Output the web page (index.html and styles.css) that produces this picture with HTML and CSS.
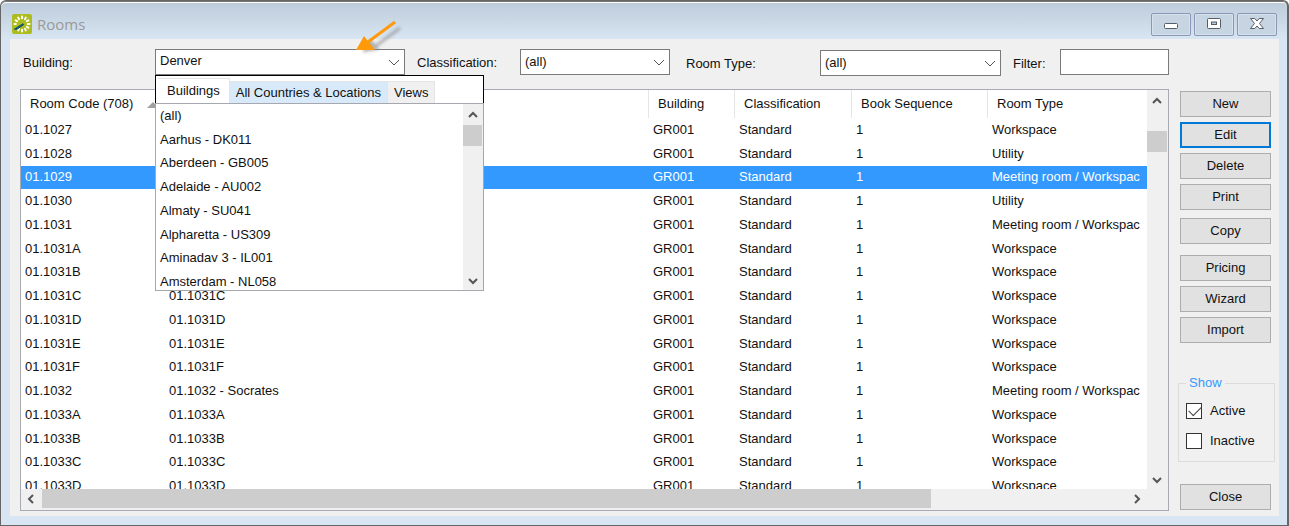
FILE: index.html
```
<!DOCTYPE html>
<html lang="en">
<head>
<meta charset="utf-8">
<title>Rooms</title>
<link rel="stylesheet" href="styles.css">
</head>
<body>
<div class="window">
  <header class="titlebar">
    <svg class="logo" viewBox="0 0 20 20" aria-hidden="true">
      <rect width="20" height="20" rx="2" fill="#adbd1f"/>
      <g fill="none" stroke="#fff" stroke-width="2" stroke-linecap="round">
        <path d="M10 2.5v1.8M13.8 3.6l-.8 1.5M16.4 6.3l-1.5.8M17.5 10h-1.8M16.4 13.7l-1.5-.8M13.8 16.4l-.8-1.5M10 17.5v-1.8M6.2 16.4l.8-1.5M3.6 6.3l1.5.8M6.2 3.6l.8 1.5M2.5 10h1.3"/>
      </g>
      <path d="M2.2 15.2 11 9.7l.7 1-6.8 4.6z" fill="#12586c" stroke="#12586c"/>
    </svg>
    <h1 class="title">Rooms</h1>
    <div class="controls">
      <button class="control" type="button" aria-label="Minimize"><svg viewBox="0 0 16 16"><rect x="1.5" y="7.5" width="13" height="5" rx="1" fill="#fff" stroke="#555d68"/></svg></button>
      <button class="control" type="button" aria-label="Maximize"><svg viewBox="0 0 16 16"><rect x="1.5" y="2.5" width="13" height="10" rx="1" fill="#fff" stroke="#555d68"/><rect x="5.5" y="6" width="5" height="2.5" fill="#b8c8d9" stroke="#555d68"/></svg></button>
      <button class="control" type="button" aria-label="Close window"><svg viewBox="0 0 16 16"><path d="M1.5 2.5h4.3L8 5l2.2-2.5h4.3l-4 5 4 5h-4.3L8 10l-2.2 2.5H1.5l4-5z" fill="#fff" stroke="#555d68"/></svg></button>
    </div>
  </header>

  <main class="client">
    <form class="filters">
      <label class="label label-first" for="building">Building:</label>
      <div class="combo combo-open">
        <select id="building" class="field"><option>Denver</option></select>
        <svg class="chevron" viewBox="0 0 12 8" aria-hidden="true"><path d="M1 1l5 5 5-5"/></svg>
        <svg class="pointer" viewBox="0 0 54 44" aria-hidden="true">
          <defs><filter id="soft"><feGaussianBlur stdDeviation="1.6"/></filter></defs>
          <g class="pointer-shadow" filter="url(#soft)"><path d="M47 13 20 33" stroke-width="3"/><path d="M10 37l7-13 9 10z"/></g>
          <path d="M42 7 15 27" stroke="#ff9a0a" stroke-width="3"/>
          <path d="M3 35 11 21l11 14z" fill="#ff9a0a"/>
        </svg>
        <section class="popup">
          <div class="tabs" role="tablist">
            <button class="tab tab-current" type="button" role="tab" aria-selected="true">Buildings</button>
            <button class="tab tab-hover" type="button" role="tab">All Countries &amp; Locations</button>
            <button class="tab" type="button" role="tab">Views</button>
          </div>
          <div class="popup-body">
            <ul class="options">
              <li>(all)</li>
              <li>Aarhus - DK011</li>
              <li>Aberdeen - GB005</li>
              <li>Adelaide - AU002</li>
              <li>Almaty - SU041</li>
              <li>Alpharetta - US309</li>
              <li>Aminadav 3 - IL001</li>
              <li>Amsterdam - NL058</li>
            </ul>
            <div class="vscroll vscroll-small">
              <svg class="arrow" viewBox="0 0 12 10"><path d="M2 7l4-4 4 4"/></svg>
              <div class="thumb"></div>
              <svg class="arrow arrow-end" viewBox="0 0 12 10"><path d="M2 3l4 4 4-4"/></svg>
            </div>
          </div>
        </section>
      </div>
      <label class="label" for="classification">Classification:</label>
      <div class="combo">
        <select id="classification" class="field"><option>(all)</option></select>
        <svg class="chevron" viewBox="0 0 12 8" aria-hidden="true"><path d="M1 1l5 5 5-5"/></svg>
      </div>
      <label class="label label-wide" for="roomtype">Room Type:</label>
      <div class="combo combo-low">
        <select id="roomtype" class="field"><option>(all)</option></select>
        <svg class="chevron" viewBox="0 0 12 8" aria-hidden="true"><path d="M1 1l5 5 5-5"/></svg>
      </div>
      <label class="label label-low" for="filter">Filter:</label>
      <input id="filter" class="field" type="text">
    </form>

    <div class="content">
      <section class="list">
        <div class="viewport">
          <table class="rooms">
            <colgroup><col class="col-code"><col><col class="col-building"><col class="col-class"><col class="col-seq"><col class="col-type"></colgroup>
            <thead><tr>
              <th class="sorted"><span>Room Code (708)</span><svg class="sort" viewBox="0 0 12 6"><path d="M0 6l6-6 6 6z"/></svg></th>
              <th></th><th>Building</th><th>Classification</th><th>Book Sequence</th><th>Room Type</th>
            </tr></thead>
            <tbody>
              <tr><td>01.1027</td><td></td><td>GR001</td><td>Standard</td><td>1</td><td>Workspace</td></tr>
              <tr><td>01.1028</td><td></td><td>GR001</td><td>Standard</td><td>1</td><td>Utility</td></tr>
              <tr class="selected"><td>01.1029</td><td></td><td>GR001</td><td>Standard</td><td>1</td><td>Meeting room / Workspac</td></tr>
              <tr><td>01.1030</td><td></td><td>GR001</td><td>Standard</td><td>1</td><td>Utility</td></tr>
              <tr><td>01.1031</td><td></td><td>GR001</td><td>Standard</td><td>1</td><td>Meeting room / Workspac</td></tr>
              <tr><td>01.1031A</td><td></td><td>GR001</td><td>Standard</td><td>1</td><td>Workspace</td></tr>
              <tr><td>01.1031B</td><td></td><td>GR001</td><td>Standard</td><td>1</td><td>Workspace</td></tr>
              <tr><td>01.1031C</td><td>01.1031C</td><td>GR001</td><td>Standard</td><td>1</td><td>Workspace</td></tr>
              <tr><td>01.1031D</td><td>01.1031D</td><td>GR001</td><td>Standard</td><td>1</td><td>Workspace</td></tr>
              <tr><td>01.1031E</td><td>01.1031E</td><td>GR001</td><td>Standard</td><td>1</td><td>Workspace</td></tr>
              <tr><td>01.1031F</td><td>01.1031F</td><td>GR001</td><td>Standard</td><td>1</td><td>Workspace</td></tr>
              <tr><td>01.1032</td><td>01.1032 - Socrates</td><td>GR001</td><td>Standard</td><td>1</td><td>Meeting room / Workspac</td></tr>
              <tr><td>01.1033A</td><td>01.1033A</td><td>GR001</td><td>Standard</td><td>1</td><td>Workspace</td></tr>
              <tr><td>01.1033B</td><td>01.1033B</td><td>GR001</td><td>Standard</td><td>1</td><td>Workspace</td></tr>
              <tr><td>01.1033C</td><td>01.1033C</td><td>GR001</td><td>Standard</td><td>1</td><td>Workspace</td></tr>
              <tr><td>01.1033D</td><td>01.1033D</td><td>GR001</td><td>Standard</td><td>1</td><td>Workspace</td></tr>
            </tbody>
          </table>
        </div>
        <div class="vscroll">
          <svg class="arrow" viewBox="0 0 12 10"><path d="M2 7l4-4 4 4"/></svg>
          <div class="thumb thumb-offset"></div>
          <svg class="arrow arrow-end" viewBox="0 0 12 10"><path d="M2 3l4 4 4-4"/></svg>
        </div>
        <div class="hscroll">
          <svg class="arrow-side" viewBox="0 0 10 12"><path d="M7 2L3 6l4 4"/></svg>
          <div class="track"><div class="hthumb"></div></div>
          <svg class="arrow-side" viewBox="0 0 10 12"><path d="M3 2l4 4-4 4"/></svg>
        </div>
      </section>

      <aside class="actions">
        <div class="group">
          <button class="btn" type="button">New</button>
          <button class="btn btn-default" type="button">Edit</button>
          <button class="btn" type="button">Delete</button>
          <button class="btn" type="button">Print</button>
        </div>
        <div class="group group-copy"><button class="btn" type="button">Copy</button></div>
        <div class="group">
          <button class="btn" type="button">Pricing</button>
          <button class="btn" type="button">Wizard</button>
          <button class="btn" type="button">Import</button>
        </div>
        <fieldset class="show">
          <legend>Show</legend>
          <label class="check"><input type="checkbox" checked><span>Active</span></label>
          <label class="check"><input type="checkbox"><span>Inactive</span></label>
        </fieldset>
        <button class="btn btn-close" type="button">Close</button>
      </aside>
    </div>
  </main>
</div>
</body>
</html>
```
FILE: styles.css
```
* { box-sizing: border-box; }

body {
  margin: 0;
  background: #fff;
  color: #111;
  font: 13px/16px "Liberation Sans", Arial, sans-serif;
}

button, input, select { font: inherit; color: inherit; }

.window {
  display: flex;
  flex-direction: column;
  min-height: 100vh;
  padding: 0 8px 9px 9px;
  border: 1px solid #666;
  border-right-width: 2px;
  border-radius: 6px 6px 0 0;
  background: linear-gradient(#bccbda, #d8e5f2 38px, #d8e5f2);
  box-shadow: inset 0 1px #777, inset 0 2px #fff;
}

.titlebar {
  display: flex;
  align-items: center;
  height: 38px;
  padding: 8px 2px 0;
}

.logo { width: 20px; height: 20px; }

.title {
  margin: 0 0 0 5px;
  color: #999;
  font: 15px/20px "Open Sans", sans-serif;
}

.controls { display: flex; gap: 3px; margin-left: auto; }

.control {
  display: flex;
  align-items: center;
  justify-content: center;
  width: 40px;
  height: 23px;
  padding: 0;
  border: 1px solid #8999b5;
  border-radius: 2px;
  background: #c7d5e3;
  box-shadow: inset 0 0 0 1px #d5e1ee;
}

.control svg { width: 16px; height: 16px; }

.client {
  display: flex;
  flex: 1;
  flex-direction: column;
  padding: 0 4px 5px 10px;
  background: #f0f0f0;
}

.filters {
  display: grid;
  grid-template-columns: 135px 250fr 115px 150fr 150px 181fr 59px 109fr;
  align-items: center;
  height: 50px;
  margin-right: 106px;
  padding-bottom: 4px;
}

.label { padding-left: 12px; padding-top: 2px; }
.label-first { padding-left: 3px; }
.label-wide { padding-left: 16px; padding-top: 4px; }
.label-low { padding-top: 4px; }

.combo { position: relative; }
.combo-low { margin-top: 2px; }

.field {
  display: block;
  width: 100%;
  height: 26px;
  padding: 0 4px 1px;
  border: 1px solid #7a7a7a;
  border-radius: 0;
  outline: 0;
  background: #fff;
  appearance: none;
}

.combo-open .field { padding-bottom: 3px; }

.chevron {
  position: absolute;
  top: 10px;
  right: 5px;
  width: 12px;
  height: 8px;
  fill: none;
  stroke: #555;
}

.pointer {
  position: absolute;
  top: -34px;
  right: -2px;
  width: 54px;
  height: 44px;
}

.pointer-shadow { fill: #888; stroke: #888; opacity: .6; }

.popup {
  position: absolute;
  z-index: 2;
  top: 26px;
  left: 0;
  width: 329px;
}

.tabs {
  display: flex;
  align-items: flex-end;
  height: 28px;
  padding-left: 2px;
  border: 1px solid #000;
  border-bottom: 0;
  background: #fff;
}

.tab {
  height: 22px;
  padding: 0 6px;
  border: 1px solid #e4e4e4;
  border-width: 1px 1px 0 0;
  background: #f0f0f0;
}

.tab-current { height: 25px; padding: 0 9px; background: #fff; }
.tab-hover { background: #d8eaf9; }

.popup-body {
  display: flex;
  height: 188px;
  border: 1px solid #a5a8ae;
  background: #fff;
  overflow: hidden;
}

.options {
  display: flex;
  flex: 1;
  flex-direction: column;
  height: 190px;
  margin: 0;
  padding: 0 4px;
  list-style: none;
}

.options li { display: flex; flex: 1; align-items: center; }

.vscroll {
  display: flex;
  flex-direction: column;
  align-items: center;
  width: 20px;
  padding-bottom: 4px;
  background: #f0f0f0;
}

.vscroll-small { padding: 0 1px 4px 0; }

.arrow { width: 12px; height: 10px; margin: 6px 0 5px; }
.arrow-end { margin: auto 0 0; }
.arrow, .arrow-side { flex: none; fill: none; stroke: #555; stroke-width: 2; }

.thumb { width: 100%; height: 21px; background: #cdcdcd; }
.thumb-offset { margin-top: 20px; }

.content { display: flex; flex: 1; gap: 9px; }

.list {
  display: grid;
  flex: 1;
  grid-template-columns: minmax(0, 1fr) 21px;
  grid-template-rows: 399px 1fr;
  border: 1px solid #a9abb3;
  background: #f0f0f0;
}

.viewport { overflow: hidden; background: #fff; }

.rooms {
  width: 100%;
  height: 408px;
  border-spacing: 0;
  table-layout: fixed;
}

.col-code { width: 144px; }
.col-building { width: 86px; }
.col-class { width: 117px; }
.col-seq { width: 136px; }
.col-type { width: 159px; }

.rooms th, .rooms td {
  padding: 0 0 0 4px;
  text-align: left;
  white-space: nowrap;
  overflow: hidden;
}

.rooms th {
  height: 28px;
  padding-left: 9px;
  border-right: 1px solid #e5e5e5;
  font-weight: 400;
}

.rooms th:last-child { border-right: 0; }
.rooms .selected td { background: #3399ff; color: #fff; }

.sort { width: 12px; height: 6px; margin-left: 14px; fill: #a0a0a0; }

.hscroll {
  display: flex;
  grid-column: 1 / -1;
  align-items: center;
  padding: 0 26px 2px 5px;
}

.arrow-side { width: 10px; height: 12px; }
.track { flex: 1; height: 19px; margin: 0 6px; }
.hthumb { width: 82%; height: 100%; background: #cdcdcd; }

.actions {
  display: flex;
  flex-direction: column;
  width: 97px;
  padding-top: 2px;
}

.group {
  display: flex;
  flex-direction: column;
  gap: 5px;
  margin: 0 4px 8px 2px;
}

.group-copy { margin-bottom: 11px; }

.btn {
  height: 26px;
  padding: 0;
  border: 1px solid #adadad;
  background: #e1e1e1;
}

.btn-default { border: 2px solid #0078d7; }

.show {
  display: flex;
  flex-direction: column;
  gap: 14px;
  margin: 24px 0 0;
  padding: 12px 7px;
  border: 1px solid #dcdcdc;
}

.show legend { padding: 0 3px; color: #3399ff; }

.check { display: flex; align-items: center; gap: 8px; }

.check input {
  width: 16px;
  height: 16px;
  margin: 0;
  border: 1px solid #333;
  background: #fff;
  appearance: none;
}

.check input:checked::after {
  content: "";
  display: block;
  width: 11px;
  height: 6px;
  margin: 2px 0 0 2px;
  border: solid #444;
  border-width: 0 0 1px 1px;
  transform: rotate(-45deg);
}

.btn-close { margin: auto 4px 1px 2px; }
```
